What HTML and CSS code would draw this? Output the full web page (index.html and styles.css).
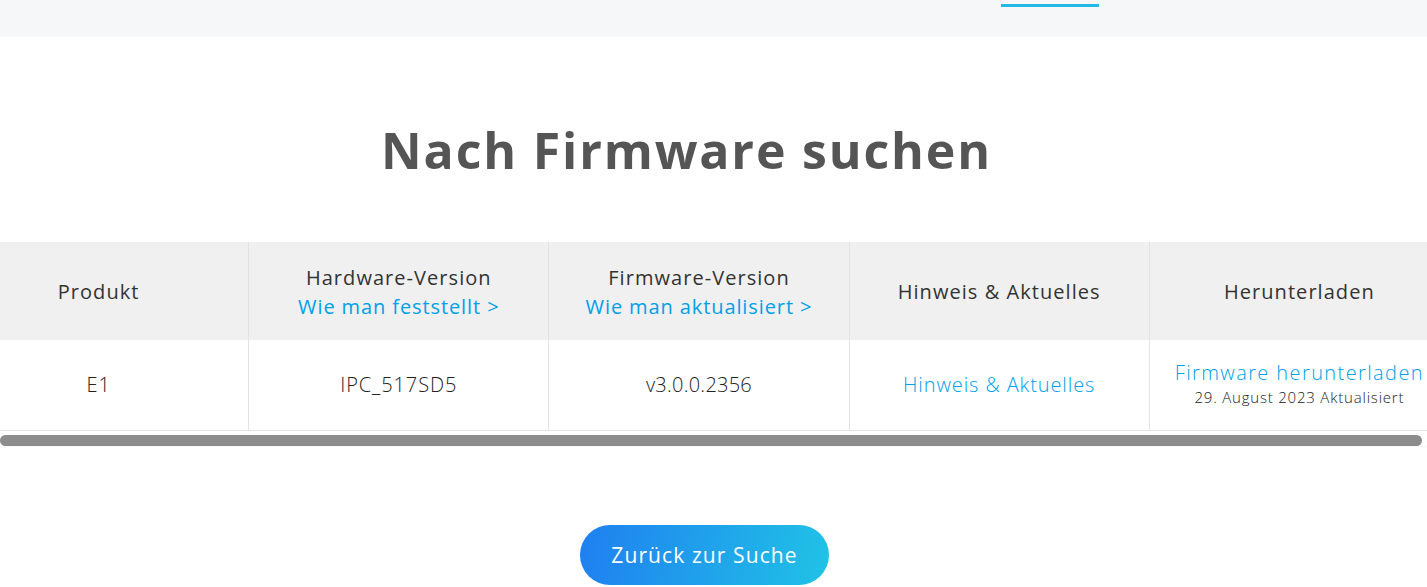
FILE: index.html
```html
<!DOCTYPE html>
<html lang="de">
<head>
<meta charset="utf-8">
<title>Nach Firmware suchen</title>
<link rel="stylesheet" href="styles.css">
</head>
<body>
<header class="topbar">
  <span class="nav-indicator"></span>
</header>
<main class="content">
  <h1 class="title">Nach Firmware suchen</h1>
  <div class="table-scroll">
    <table class="fw-table">
      <thead>
        <tr>
          <th>Produkt</th>
          <th>Hardware-Version<br><a class="link" href="#">Wie man feststellt &gt;</a></th>
          <th>Firmware-Version<br><a class="link" href="#">Wie man aktualisiert &gt;</a></th>
          <th>Hinweis &amp; Aktuelles</th>
          <th>Herunterladen</th>
        </tr>
      </thead>
      <tbody>
        <tr>
          <td>E1</td>
          <td>IPC_517SD5</td>
          <td class="tight">v3.0.0.2356</td>
          <td><a class="link" href="#">Hinweis &amp; Aktuelles</a></td>
          <td><a class="link dl" href="#">Firmware herunterladen</a><div class="date">29. August 2023 Aktualisiert</div></td>
        </tr>
      </tbody>
    </table>
  </div>
  <div class="scrollbar"><div class="thumb"></div></div>
  <div class="actions">
    <a class="btn" href="#">Zurück zur Suche</a>
  </div>
</main>
</body>
</html>
```
FILE: styles.css
```css
html, body {
  margin: 0;
  padding: 0;
  background: #fff;
  font-family: "Open Sans", "Liberation Sans", sans-serif;
  color: #333;
  overflow: hidden;
}
.topbar {
  height: 37px;
  background: #f6f7f9;
  display: flex;
  justify-content: flex-end;
  padding-right: 328px;
}
.nav-indicator {
  display: block;
  width: 98px;
  height: 3px;
  margin-top: 4px;
  background: #22b8e8;
}
.content {
  display: flex;
  flex-direction: column;
}
.title {
  margin: 84px 0 0;
  padding-right: 54px;
  height: 121px;
  font-size: 50px;
  line-height: 58px;
  font-weight: 700;
  color: #555;
  text-align: center;
  letter-spacing: 1.85px;
}
.table-scroll {
  overflow: hidden;
  width: 100%;
}
.fw-table {
  width: 1500px;
  min-width: 1500px;
  margin-left: -51px;
  border-collapse: collapse;
  table-layout: fixed;
}
.fw-table th, .fw-table td {
  width: 299px;
  text-align: center;
  vertical-align: middle;
  border-left: 1px solid #e2e2e2;
  padding: 0;
}
.fw-table th:first-child, .fw-table td:first-child {
  border-left: none;
}
.fw-table thead tr {
  background: #f0f0f0;
  height: 98px;
}
.fw-table th {
  font-size: 20px;
  line-height: 29px;
  font-weight: 400;
  color: #333;
  letter-spacing: 1.05px;
  padding-top: 1px;
}
.fw-table th:first-child, .fw-table th:nth-child(4), .fw-table th:nth-child(5) {
  padding-top: 0;
}
.fw-table tbody tr {
  height: 90px;
  border-bottom: 1px solid #e2e2e2;
}
.fw-table td {
  font-size: 20px;
  line-height: 25px;
  font-weight: 300;
  color: #222;
  letter-spacing: 0.9px;
}
.fw-table td.tight {
  letter-spacing: 0.25px;
}
.link {
  color: #00a0e9;
  text-decoration: none;
}
.fw-table th .link {
  letter-spacing: 0.9px;
}
.fw-table td .dl {
  letter-spacing: 1.4px;
}
.date {
  font-size: 15px;
  line-height: 24px;
  letter-spacing: 0.8px;
  color: #222;
}
.scrollbar {
  height: 16px;
  padding-top: 4px;
  box-sizing: border-box;
  background: linear-gradient(#fff 0, #fff 15px, #f8f8f8 15px);
}
.thumb {
  width: 1422px;
  height: 11px;
  border-radius: 6px;
  background: #8c8c8c;
}
.actions {
  display: flex;
  justify-content: center;
  padding-top: 78px;
  padding-right: 18px;
}
.btn {
  display: flex;
  align-items: center;
  justify-content: center;
  width: 249px;
  height: 60px;
  border-radius: 30px;
  background: linear-gradient(100deg, #1f7ff0 0%, #20c3e6 100%);
  color: #fff;
  font-size: 21px;
  letter-spacing: 1.1px;
  text-decoration: none;
}
```
